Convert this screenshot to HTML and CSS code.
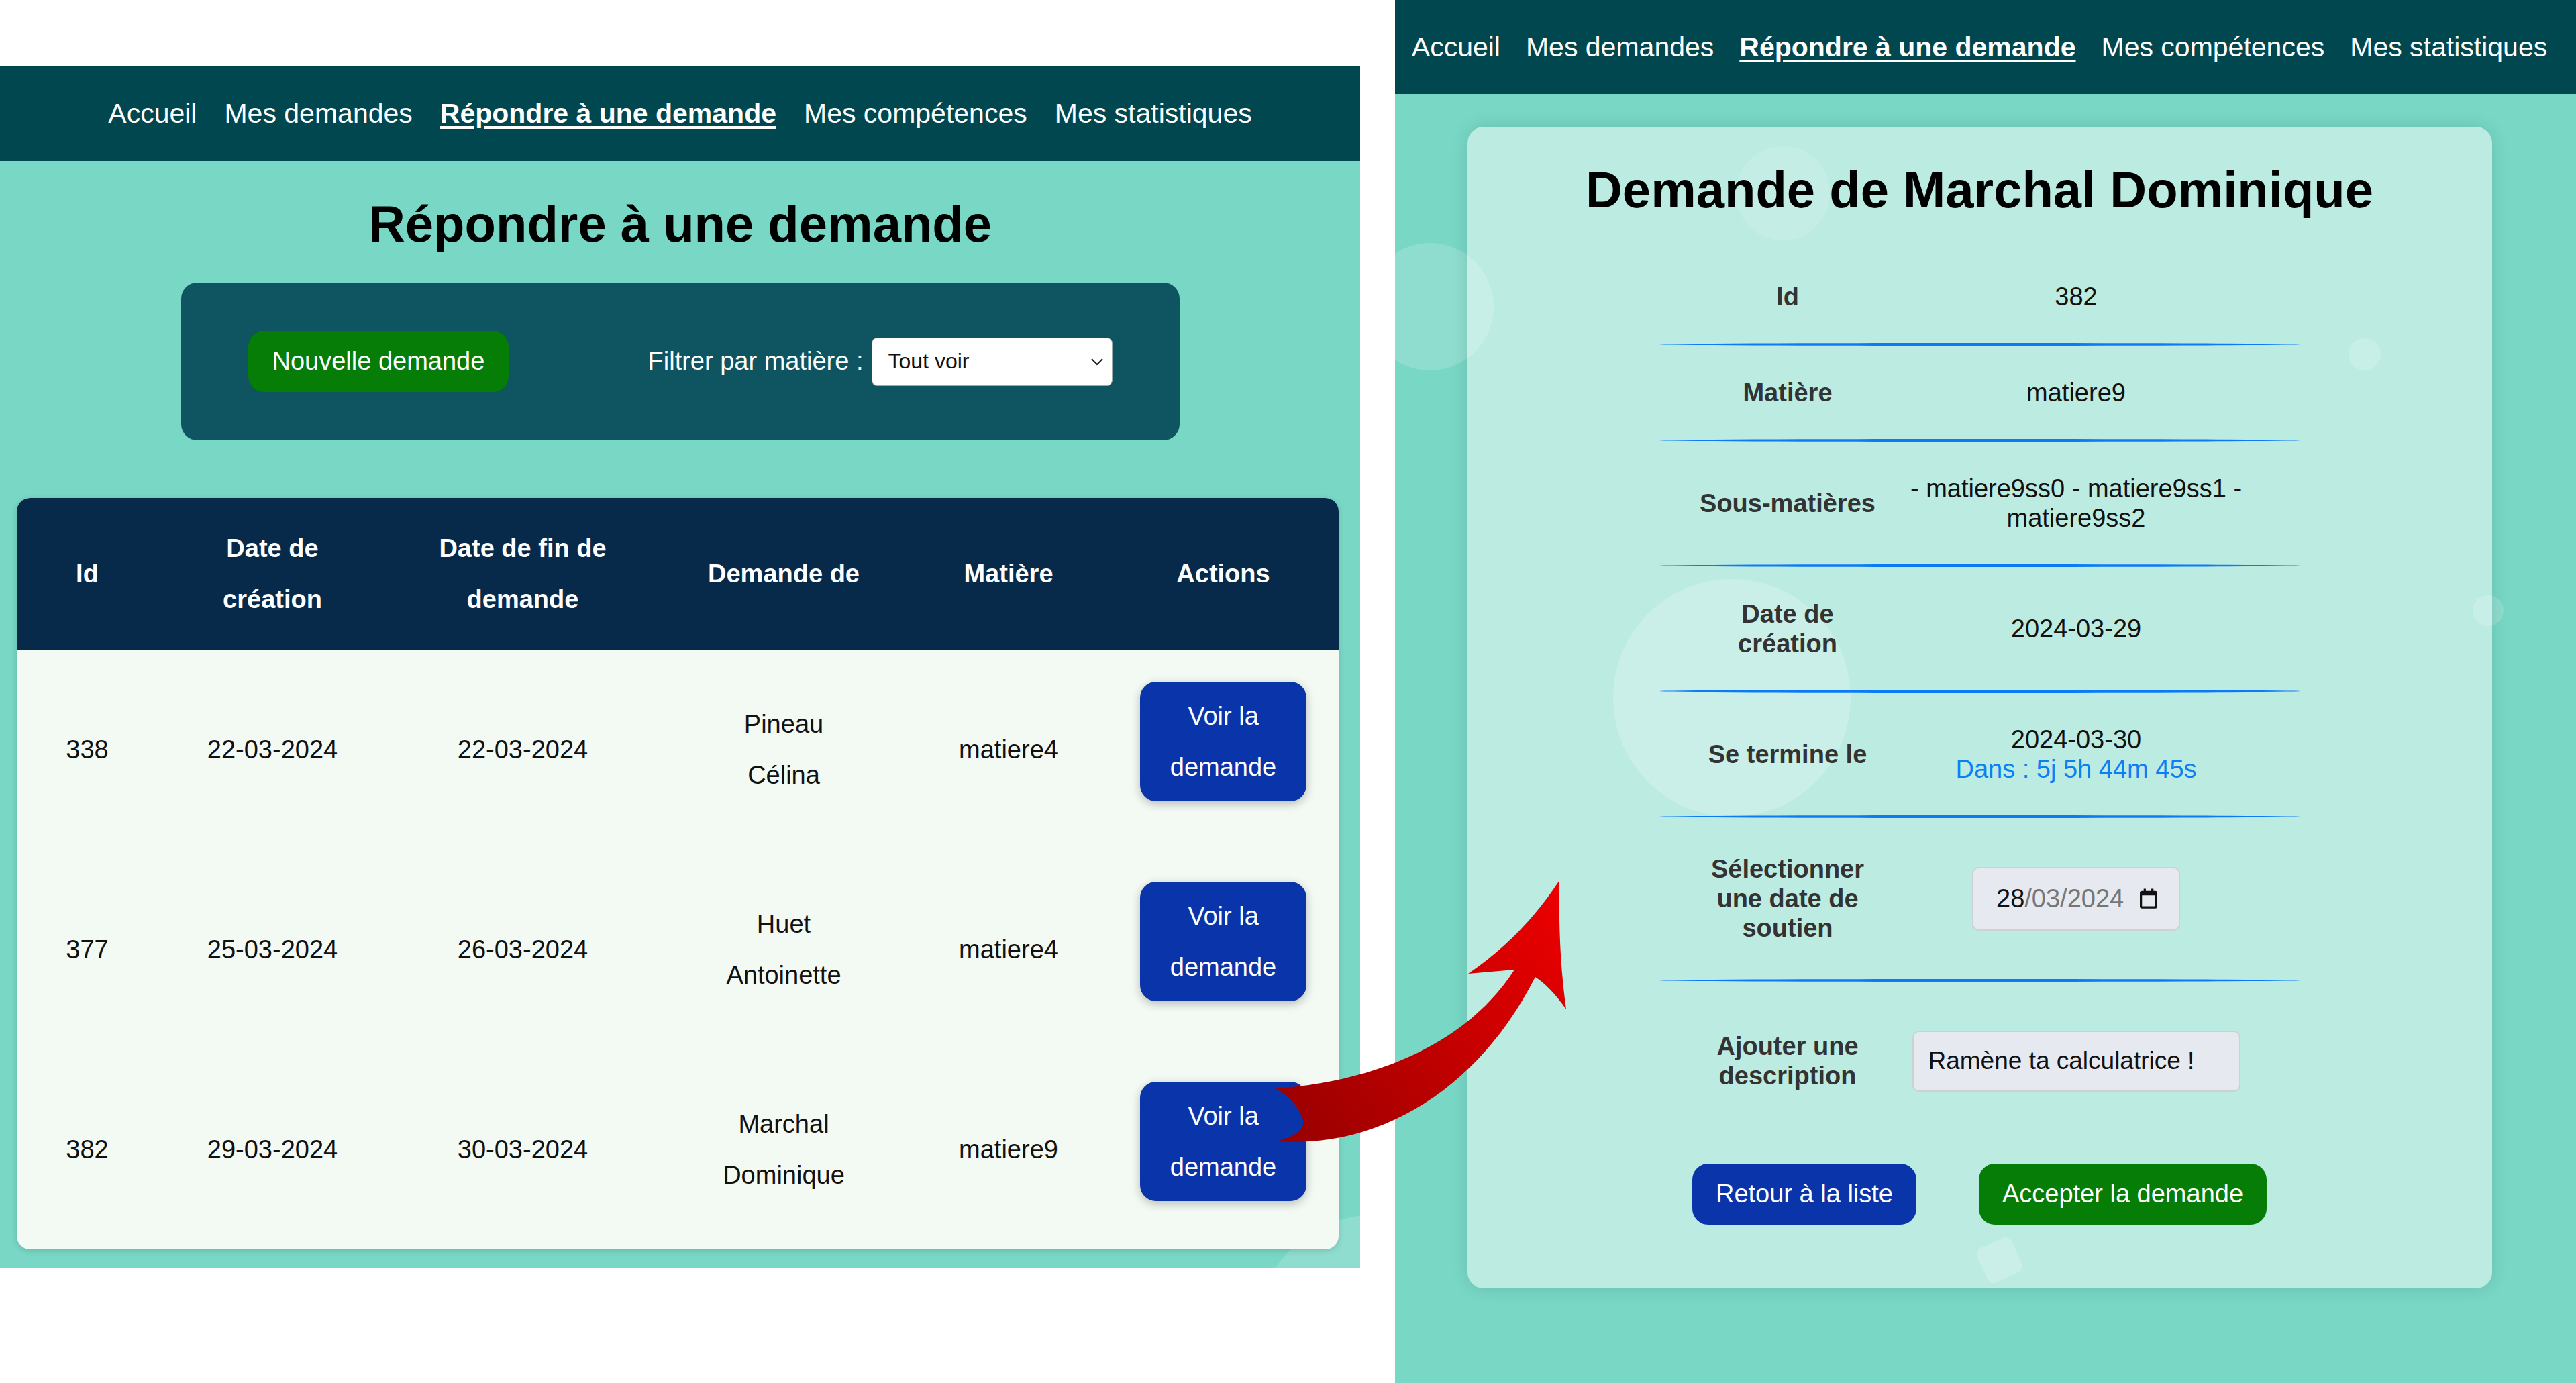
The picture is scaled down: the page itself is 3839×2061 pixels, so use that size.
FILE: index.html
```html
<!DOCTYPE html>
<html lang="fr">
  <head>
    <meta charset="UTF-8" />
    <meta name="viewport" content="width=device-width, initial-scale=1.0" />
    <title>Répondre à une demande</title>
    <link rel="stylesheet" href="styles.css">
  </head>
  <body>
    <div class="board">

      <!-- liste des demandes ouvertes -->
      <section class="shot shot-list">
        <nav class="topnav">
          <a href="#">Accueil</a>
          <a href="#">Mes demandes</a>
          <a href="#" class="active">Répondre à une demande</a>
          <a href="#">Mes compétences</a>
          <a href="#">Mes statistiques</a>
        </nav>
        <main class="page">
          <span class="bubble bubble-list"></span>
          <h1>Répondre à une demande</h1>

          <div class="toolbar">
            <button class="btn btn-green">Nouvelle demande</button>
            <div class="filter">
              <span>Filtrer par matière :</span>
              <div class="select">
                <span>Tout voir</span>
                <svg width="20" height="12" viewBox="0 0 20 12"><polyline points="2,2 10,10 18,2" fill="none" stroke="#222" stroke-width="2"/></svg>
              </div>
            </div>
          </div>

          <div class="table-wrap">
            <table class="requests">
              <colgroup>
                <col class="c-id"><col class="c-created"><col class="c-end">
                <col class="c-from"><col class="c-subject"><col class="c-actions">
              </colgroup>
              <thead>
                <tr>
                  <th>Id</th>
                  <th>Date de création</th>
                  <th>Date de fin de demande</th>
                  <th>Demande de</th>
                  <th>Matière</th>
                  <th>Actions</th>
                </tr>
              </thead>
              <tbody>
                <tr>
                  <td>338</td>
                  <td>22-03-2024</td>
                  <td>22-03-2024</td>
                  <td>Pineau<br>Célina</td>
                  <td>matiere4</td>
                  <td><a href="#" class="btn btn-blue btn-view">Voir la demande</a></td>
                </tr>
                <tr>
                  <td>377</td>
                  <td>25-03-2024</td>
                  <td>26-03-2024</td>
                  <td>Huet<br>Antoinette</td>
                  <td>matiere4</td>
                  <td><a href="#" class="btn btn-blue btn-view">Voir la demande</a></td>
                </tr>
                <tr>
                  <td>382</td>
                  <td>29-03-2024</td>
                  <td>30-03-2024</td>
                  <td>Marchal<br>Dominique</td>
                  <td>matiere9</td>
                  <td><a href="#" class="btn btn-blue btn-view">Voir la demande</a></td>
                </tr>
              </tbody>
            </table>
          </div>
        </main>
      </section>

      <!-- détail d'une demande -->
      <section class="shot shot-detail">
        <nav class="topnav">
          <a href="#">Accueil</a>
          <a href="#">Mes demandes</a>
          <a href="#" class="active">Répondre à une demande</a>
          <a href="#">Mes compétences</a>
          <a href="#">Mes statistiques</a>
        </nav>
        <main class="page">
          <span class="bubble bubble-1"></span>
          <span class="bubble bubble-2"></span>
          <span class="bubble bubble-3"></span>
          <span class="bubble bubble-4"></span>
          <span class="bubble bubble-5"></span>
          <span class="bubble bubble-square"></span>

          <div class="card">
            <h1>Demande de Marchal Dominique</h1>

            <div class="details">
              <div class="detail-row">
                <span class="detail-label">Id</span>
                <span class="detail-value">382</span>
              </div>
              <hr class="sep">
              <div class="detail-row">
                <span class="detail-label">Matière</span>
                <span class="detail-value">matiere9</span>
              </div>
              <hr class="sep">
              <div class="detail-row">
                <span class="detail-label">Sous-matières</span>
                <span class="detail-value">- matiere9ss0 - matiere9ss1 - matiere9ss2</span>
              </div>
              <hr class="sep">
              <div class="detail-row">
                <span class="detail-label">Date de création</span>
                <span class="detail-value">2024-03-29</span>
              </div>
              <hr class="sep">
              <div class="detail-row">
                <span class="detail-label">Se termine le</span>
                <span class="detail-value">2024-03-30<span class="countdown">Dans : 5j 5h 44m 45s</span></span>
              </div>
              <hr class="sep">
              <div class="detail-row">
                <span class="detail-label">Sélectionner une date de soutien</span>
                <div class="field field-date">
                  <span><span class="date-day">28</span>/03/2024</span>
                  <svg width="26" height="30" viewBox="0 0 16 18"><path fill-rule="evenodd" fill="#111" d="M3.5 0h2v2h5V0h2v2H14a2 2 0 0 1 2 2v12a2 2 0 0 1-2 2H2a2 2 0 0 1-2-2V4a2 2 0 0 1 2-2h1.5z M2 6v10h12V6z"/></svg>
                </div>
              </div>
              <hr class="sep">
              <div class="detail-row">
                <span class="detail-label">Ajouter une description</span>
                <input type="text" class="field field-text" value="Ramène ta calculatrice !">
              </div>
            </div>

            <div class="card-actions">
              <a href="#" class="btn btn-blue">Retour à la liste</a>
              <a href="#" class="btn btn-green">Accepter la demande</a>
            </div>
          </div>
        </main>
      </section>

      <!-- flèche entre la liste et le détail -->
      <svg class="arrow" width="3839" height="2061" viewBox="0 0 3839 2061">
        <defs>
          <linearGradient id="arrow-fill" gradientUnits="userSpaceOnUse" x1="1900" y1="1680" x2="2330" y2="1320">
            <stop offset="0" stop-color="#980000"/>
            <stop offset="0.55" stop-color="#c80000"/>
            <stop offset="1" stop-color="#ee0000"/>
          </linearGradient>
        </defs>
        <path fill="url(#arrow-fill)" d="M1901,1622 C2030,1614 2180,1565 2257,1445 L2188,1451 Q2270,1395 2324,1312 Q2322,1420 2334,1504 Q2310,1470 2288,1456 C2210,1610 2070,1712 1903,1701 Q1950,1688 1941,1666 Q1932,1640 1901,1622 Z"/>
      </svg>
    </div>
  </body>
</html>
```

FILE: styles.css
```css
* {
  box-sizing: border-box;
}
body {
  margin: 0;
  background: #fff;
  font-family: "Liberation Sans", Arial, sans-serif;
  color: #111;
}
.board {
  position: relative;
  display: flex;
  gap: 52px;
  width: 3839px;
  height: 2061px;
  overflow: hidden;
}
.shot-list {
  width: 2027px;
  padding-top: 98px;
}
.shot-detail {
  width: 1760px;
}

/* barre de navigation */
.topnav {
  display: flex;
  justify-content: center;
  align-items: center;
  gap: 41px;
  background: #01474f;
  font-size: 41px;
}
.shot-list .topnav {
  height: 142px;
}
.shot-detail .topnav {
  height: 140px;
  padding-right: 18px;
  gap: 38px;
}
.topnav a {
  color: #fff;
  text-decoration: none;
}
.topnav a.active {
  font-weight: bold;
  text-decoration: underline;
  text-decoration-thickness: 4px;
  text-underline-offset: 5px;
}

.page {
  position: relative;
  overflow: hidden;
  background: #78d7c5;
}
.shot-list .page {
  height: 1650px;
  padding-top: 50px;
}
.shot-detail .page {
  height: 1921px;
  padding: 49px 18px 0 0;
}
h1 {
  position: relative;
  margin: 0;
  font-size: 76px;
  text-align: center;
  color: #000;
}

/* bulles décoratives du fond */
.bubble {
  position: absolute;
  border-radius: 50%;
  background: rgba(255, 255, 255, 0.17);
}
.bubble-list {
  left: 1870px;
  top: 1570px;
  width: 360px;
  height: 360px;
}
.bubble-1 {
  left: -43px;
  top: 222px;
  width: 190px;
  height: 190px;
}
.bubble-2 {
  left: 508px;
  top: 78px;
  width: 140px;
  height: 140px;
  background: rgba(255, 255, 255, 0.12);
}
.bubble-3 {
  left: 325px;
  top: 723px;
  width: 354px;
  height: 354px;
  background: rgba(255, 255, 255, 0.22);
}
.bubble-4 {
  left: 1421px;
  top: 364px;
  width: 48px;
  height: 48px;
}
.bubble-5 {
  left: 1606px;
  top: 747px;
  width: 46px;
  height: 46px;
}
.bubble-square {
  left: 873px;
  top: 1710px;
  width: 56px;
  height: 56px;
  border-radius: 10px;
  transform: rotate(-25deg);
  background: rgba(255, 255, 255, 0.22);
}

/* boutons */
.btn {
  display: inline-block;
  border: 0;
  border-radius: 24px;
  padding: 23px 35px;
  font-family: inherit;
  font-size: 38px;
  line-height: 45px;
  color: #fff;
  text-align: center;
  text-decoration: none;
  cursor: pointer;
}
.btn-green {
  background: #067d06;
}
.btn-blue {
  background: #0a35aa;
}

/* filtre au-dessus du tableau */
.toolbar {
  position: relative;
  display: flex;
  justify-content: space-between;
  align-items: center;
  width: 1488px;
  height: 235px;
  margin: 44px auto 0;
  padding: 0 100px;
  background: #0e5461;
  border-radius: 24px;
}
.toolbar .btn {
  padding: 23px 36px;
}
.filter {
  display: flex;
  align-items: center;
  gap: 12px;
  color: #fff;
  font-size: 38px;
}
.select {
  display: flex;
  justify-content: space-between;
  align-items: center;
  width: 359px;
  height: 72px;
  padding: 0 12px 0 24px;
  background: #fff;
  border: 1px solid #9aa;
  border-radius: 8px;
  color: #111;
  font-size: 32px;
}

/* tableau des demandes */
.table-wrap {
  position: relative;
  width: 1970px;
  margin: 86px 0 0 25px;
  border-radius: 20px;
  overflow: hidden;
  background: #f3faf3;
  box-shadow: 0 2px 10px rgba(0, 0, 0, 0.15);
}
.requests {
  width: 100%;
  border-collapse: collapse;
  table-layout: fixed;
  font-size: 38px;
  line-height: 76px;
  text-align: center;
}
.c-id { width: 210px; }
.c-created { width: 342px; }
.c-end { width: 404px; }
.c-from { width: 374px; }
.c-subject { width: 296px; }
.c-actions { width: 344px; }
.requests th {
  padding: 37px 30px;
  background: #072a4a;
  color: #fff;
  font-weight: bold;
}
.requests td {
  padding: 48px 30px;
  color: #111;
}
.btn-view {
  display: block;
  width: 248px;
  margin: 0 auto 24px;
  padding: 13px 20px;
  line-height: 76px;
  box-shadow: 0 4px 14px rgba(0, 0, 0, 0.25);
}

/* fiche de la demande */
.card {
  position: relative;
  z-index: 1;
  width: 1527px;
  margin: 0 auto;
  padding: 50px 0 95px;
  background: rgba(255, 255, 255, 0.5);
  border-radius: 24px;
  box-shadow: 0 0 26px rgba(0, 0, 0, 0.12);
}
.card h1 {
  margin-bottom: 46px;
}
.details {
  width: 955px;
  margin: 0 auto;
}
.detail-row {
  display: grid;
  grid-template-columns: 288px 572px;
  justify-content: center;
  align-items: center;
  padding: 47.5px 0;
  font-size: 38px;
  line-height: 44px;
  text-align: center;
}
.detail-label {
  font-weight: bold;
  color: #333;
}
.detail-value {
  color: #111;
}
.countdown {
  display: block;
  color: #0d7ff4;
}
.sep {
  height: 4px;
  margin: 0;
  border: 0;
  border-radius: 50%;
  background: #0a7bf5;
}
.field {
  justify-self: center;
  margin: 25px 0;
  background: #e6e9f0;
  border: 2px solid #cdd0d4;
  border-radius: 10px;
  font-family: inherit;
  color: #111;
}
.field-date {
  display: flex;
  align-items: center;
  gap: 24px;
  width: 310px;
  height: 95px;
  padding-left: 34px;
  font-size: 38px;
  color: #767676;
}
.date-day {
  color: #111;
}
.field-text {
  width: 489px;
  height: 91px;
  padding: 0 22px;
  font-size: 37px;
}
.card-actions {
  display: flex;
  justify-content: center;
  gap: 93px;
  margin-top: 35px;
}

.arrow {
  position: absolute;
  top: 0;
  left: 0;
  z-index: 5;
  pointer-events: none;
}
```
